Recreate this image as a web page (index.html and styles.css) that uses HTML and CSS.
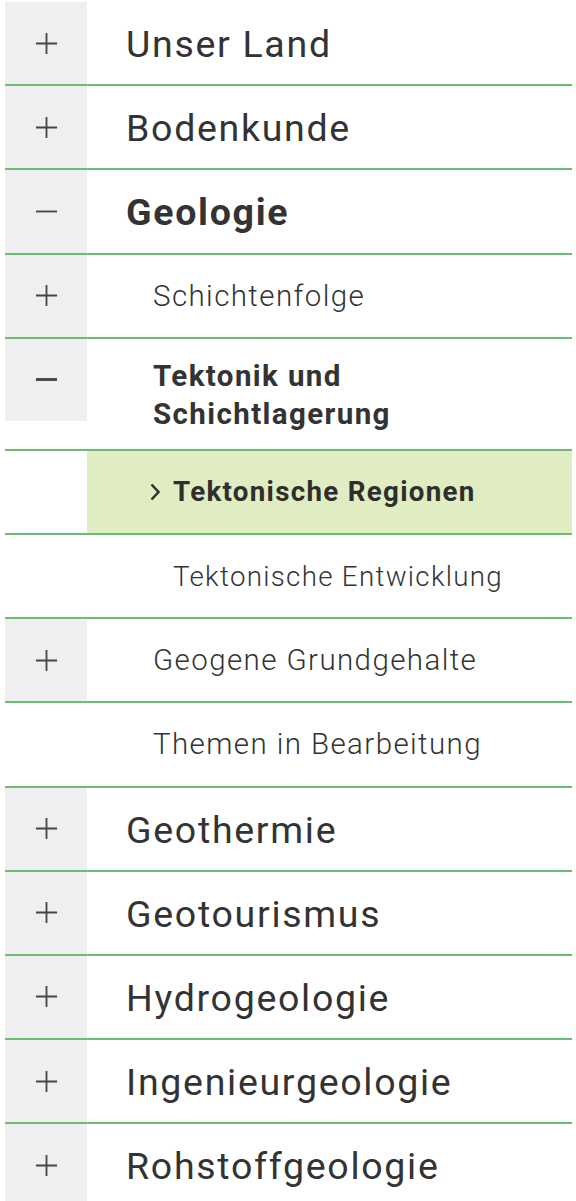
FILE: index.html
```html
<!DOCTYPE html>
<html lang="de">
<head>
<meta charset="utf-8">
<title>Navigation</title>
<link rel="stylesheet" href="styles.css">
</head>
<body>
<nav class="menu">
  <ul class="list">
    <li class="row lvl1">
      <span class="toggle"><svg class="ico" viewBox="0 0 24 24"><path d="M12 1v22M1 12h22"/></svg></span>
      <a class="label">Unser Land</a>
    </li>
    <li class="row lvl1">
      <span class="toggle"><svg class="ico" viewBox="0 0 24 24"><path d="M12 1v22M1 12h22"/></svg></span>
      <a class="label">Bodenkunde</a>
    </li>
    <li class="row lvl1 open">
      <span class="toggle"><svg class="ico" viewBox="0 0 24 24"><path d="M1 12h22"/></svg></span>
      <a class="label">Geologie</a>
    </li>
    <li class="row lvl2">
      <span class="toggle"><svg class="ico" viewBox="0 0 24 24"><path d="M12 1v22M1 12h22"/></svg></span>
      <a class="label">Schichtenfolge</a>
    </li>
    <li class="row lvl2 open tall">
      <span class="toggle short"><svg class="ico thick" viewBox="0 0 24 24"><path d="M1 12h22"/></svg></span>
      <a class="label">Tektonik und<br>Schichtlagerung</a>
    </li>
    <li class="row lvl3 active">
      <span class="spacer"></span>
      <a class="label"><svg class="chev" viewBox="0 0 10 18"><path d="M1.5 1.5l7 7.5-7 7.5"/></svg>Tektonische Regionen</a>
    </li>
    <li class="row lvl3">
      <span class="spacer"></span>
      <a class="label">Tektonische Entwicklung</a>
    </li>
    <li class="row lvl2">
      <span class="toggle"><svg class="ico" viewBox="0 0 24 24"><path d="M12 1v22M1 12h22"/></svg></span>
      <a class="label">Geogene Grundgehalte</a>
    </li>
    <li class="row lvl2">
      <span class="spacer"></span>
      <a class="label">Themen in Bearbeitung</a>
    </li>
    <li class="row lvl1">
      <span class="toggle"><svg class="ico" viewBox="0 0 24 24"><path d="M12 1v22M1 12h22"/></svg></span>
      <a class="label">Geothermie</a>
    </li>
    <li class="row lvl1">
      <span class="toggle"><svg class="ico" viewBox="0 0 24 24"><path d="M12 1v22M1 12h22"/></svg></span>
      <a class="label">Geotourismus</a>
    </li>
    <li class="row lvl1">
      <span class="toggle"><svg class="ico" viewBox="0 0 24 24"><path d="M12 1v22M1 12h22"/></svg></span>
      <a class="label">Hydrogeologie</a>
    </li>
    <li class="row lvl1">
      <span class="toggle"><svg class="ico" viewBox="0 0 24 24"><path d="M12 1v22M1 12h22"/></svg></span>
      <a class="label">Ingenieurgeologie</a>
    </li>
    <li class="row lvl1">
      <span class="toggle"><svg class="ico" viewBox="0 0 24 24"><path d="M12 1v22M1 12h22"/></svg></span>
      <a class="label">Rohstoffgeologie</a>
    </li>
  </ul>
</nav>
</body>
</html>
```

FILE: styles.css
```css
html, body {
  margin: 0;
  padding: 0;
  background: #ffffff;
}

body {
  font-family: Roboto, "Liberation Sans", Arial, sans-serif;
  color: #333333;
}

.menu {
  margin: 2px 4px 0 5px;
}

.list {
  list-style: none;
  margin: 0;
  padding: 0;
}

.row {
  display: flex;
  align-items: stretch;
  min-height: 82.2px;
  border-bottom: 2px solid #6cbd70;
}

.toggle {
  flex: none;
  width: 82px;
  background: #efeff1;
  display: flex;
  align-items: center;
  justify-content: center;
}

.toggle.short {
  align-self: flex-start;
  height: 82px;
}

.spacer {
  flex: none;
  width: 82px;
}

.ico {
  width: 23px;
  height: 23px;
  fill: none;
  stroke: #454545;
  stroke-width: 1.9;
}

.ico.thick {
  stroke-width: 3;
}

.label {
  flex: 1;
  display: flex;
  align-items: center;
  color: #333333;
  text-decoration: none;
  white-space: nowrap;
}

.lvl1 .label {
  padding-left: 39px;
  font-size: 37.5px;
  letter-spacing: 1.7px;
  font-weight: 400;
  padding-top: 2px;
}

.lvl1.open .label {
  font-weight: 700;
}

.lvl2 .label {
  padding-left: 66px;
  font-size: 29.5px;
  letter-spacing: 1.4px;
  font-weight: 300;
  color: #333333;
}

.lvl2.open .label {
  display: block;
  font-weight: 700;
  line-height: 38px;
  padding-top: 18px;
  padding-bottom: 16px;
}

.tall {
  min-height: 110px;
}

.lvl3 .label {
  padding-left: 86px;
  font-size: 27.7px;
  letter-spacing: 1.3px;
  font-weight: 300;
  color: #333333;
}

.lvl3.active .label {
  background: #e0ecc1;
  padding-left: 63px;
  font-weight: 700;
  color: #2e2e2e;
}

.chev {
  width: 10px;
  height: 18px;
  margin-right: 13px;
  fill: none;
  stroke: #2e2e2e;
  stroke-width: 2.4;
}
```
